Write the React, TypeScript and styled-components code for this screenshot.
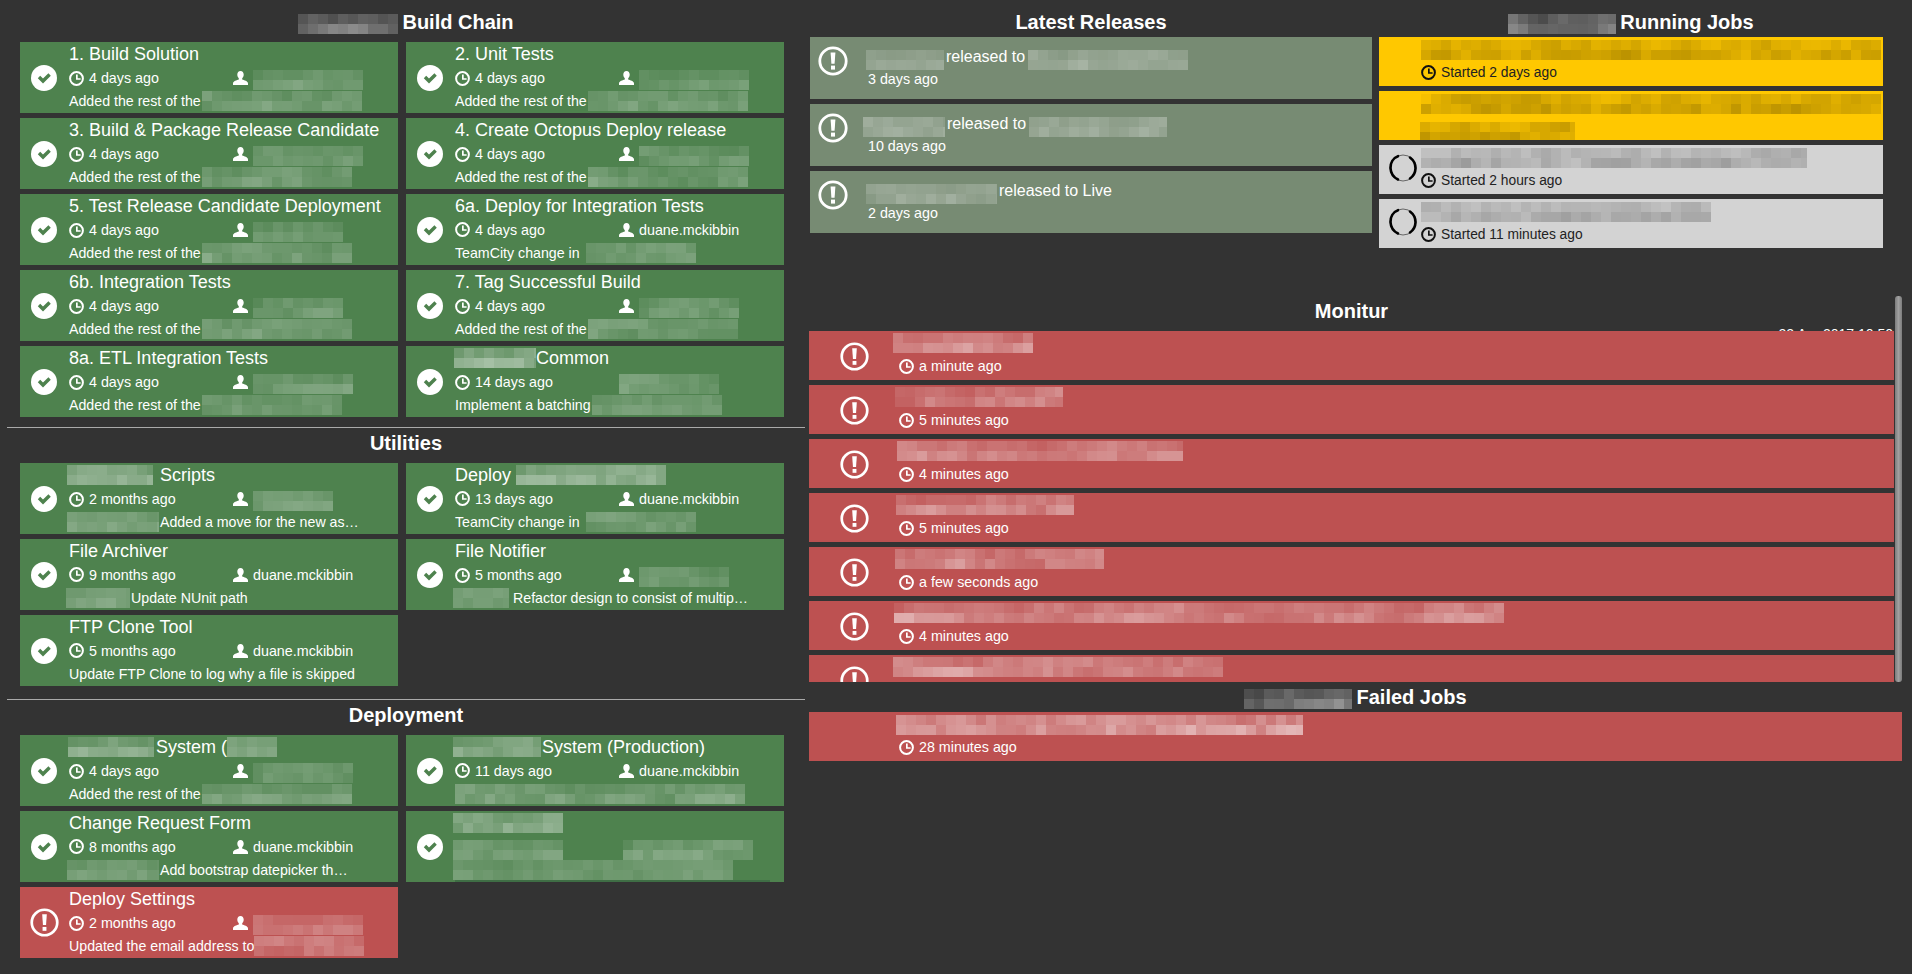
import React from 'react';
import styled, { createGlobalStyle } from 'styled-components';

const GREEN = '#4e824e';
const RED = '#bd5151';
const SAGE = '#778b73';
const YELLOW = '#ffc800';
const GREY = '#d3d3d3';

const Global = createGlobalStyle`
  html, body {
    margin: 0;
    height: 100%;
    overflow: hidden;
    background: #333;
    color: #fff;
    font-family: "Liberation Sans", Arial, sans-serif;
  }
`

const BlurSvg = styled.svg<{ $ml: number; $mr: number; $mt: number }>`
  display: block;
  flex: none;
  margin: ${p => p.$mt}px ${p => p.$mr}px 0 ${p => p.$ml}px;
`
const Page = styled.div`
  display: grid;
  grid-template-columns: 798px 1fr;
  column-gap: 4px;
  padding: 7px 10px 0 7px;
`
const LeftColumn = styled.div`
  display: flex;
  flex-direction: column;
`
const RightColumn = styled.div`
  display: flex;
  flex-direction: column;
  min-width: 0;
`
const TopRow = styled.div`
  display: grid;
  grid-template-columns: 562px 504px;
  column-gap: 7px;
  padding-left: 1px;
  height: 289px;
`
const Heading = styled.div<{ $gap?: number }>`
  display: flex;
  justify-content: center;
  align-items: center;
  height: 30px;
  margin-bottom: ${p => p.$gap ?? 0}px;
  font-size: 20px;
  font-weight: 700;
  white-space: nowrap;
`
const Divider = styled.div<{ $top: number }>`
  height: 1px;
  margin-top: ${p => p.$top}px;
  background: #aaa;
`
const BuildGrid = styled.div`
  display: grid;
  grid-template-columns: 378px 378px;
  column-gap: 8px;
  row-gap: 5px;
  padding-left: 13px;
`
const Card = styled.div<{ $bg: string }>`
  display: flex;
  height: 71px;
  background: ${p => p.$bg};
  overflow: hidden;
`
const IconCell = styled.div`
  flex: 0 0 49px;
  display: flex;
  align-items: center;
  justify-content: center;
  padding-right: 1px;
  box-sizing: border-box;
`
const CardBody = styled.div`
  flex: 1;
  min-width: 0;
  display: grid;
  grid-template-rows: 24px 23px 23px;
`
const CardTitle = styled.div`
  display: flex;
  align-items: center;
  font-size: 18px;
  white-space: nowrap;
`
const CardMeta = styled.div`
  display: grid;
  grid-template-columns: 164px 1fr;
  align-items: center;
  font-size: 14.3px;
`
const MetaItem = styled.div<{ $gap: number }>`
  display: flex;
  align-items: center;
  gap: ${p => p.$gap}px;
  white-space: nowrap;
  ${BlurSvg} {
    margin-top: 4px;
  }
`
const CardCommit = styled.div`
  display: flex;
  align-items: center;
  font-size: 14.2px;
  white-space: nowrap;
`
const RawBody = styled.div`
  display: flex;
  flex-direction: column;
  padding-top: 2px;
`
const RawLine = styled.div<{ $top: number }>`
  display: flex;
  margin-top: ${p => p.$top}px;
`
const RawShadow = styled.div`
  width: 315px;
  height: 2px;
  background: #3f6e45;
`
const Stack = styled.div<{ $gap?: number }>`
  display: flex;
  flex-direction: column;
  gap: ${p => p.$gap ?? 5}px;
`
const ReleaseCard = styled.div`
  display: flex;
  height: 62px;
  background: ${SAGE};
`
const ReleaseIcon = styled.div`
  flex: 0 0 56px;
  padding: 9px 0 0 8px;
  box-sizing: border-box;
`
const ReleaseBody = styled.div`
  display: flex;
  flex-direction: column;
  padding-top: 10px;
`
const ReleaseTitle = styled.div`
  display: flex;
  align-items: center;
  height: 20px;
  font-size: 16px;
  white-space: nowrap;
`
const ReleaseTime = styled.div`
  height: 20px;
  margin-top: 2px;
  padding-left: 2px;
  font-size: 14.3px;
  line-height: 20px;
`
const JobCard = styled.div<{ $bg: string }>`
  display: flex;
  height: 49px;
  background: ${p => p.$bg};
  color: #222;
  overflow: hidden;
`
const JobIcon = styled.div`
  flex: 0 0 41px;
  display: flex;
  align-items: center;
  justify-content: flex-end;
  padding: 0 3px 3px 0;
  box-sizing: border-box;
`
const JobBody = styled.div`
  display: flex;
  flex-direction: column;
  padding: 3px 0 0 1px;
`
const TimeRow = styled.div<{ $top: number; $left: number; $size?: number }>`
  display: flex;
  align-items: center;
  gap: 5px;
  margin-top: ${p => p.$top}px;
  padding-left: ${p => p.$left}px;
  height: 18px;
  font-size: ${p => p.$size ?? 14.3}px;
  white-space: nowrap;
`
const MonitorPane = styled.div`
  position: relative;
  height: 386px;
  padding-right: 8px;
  overflow: hidden;
`
const DateStamp = styled.div`
  height: 5px;
  padding-right: 1px;
  font-size: 14px;
  line-height: 16px;
  text-align: right;
  overflow: hidden;
`
const MonitorRows = styled.div`
  display: flex;
  flex-direction: column;
  gap: 5px;
`
const AlertRow = styled.div`
  flex: none;
  display: flex;
  height: 49px;
  background: ${RED};
`
const AlertIcon = styled.div`
  flex: 0 0 84px;
  display: flex;
  justify-content: center;
  padding: 11px 0 0 6px;
  box-sizing: border-box;
`
const AlertBody = styled.div`
  display: flex;
  flex-direction: column;
  padding-top: 2px;
`
const ScrollThumb = styled.div`
  position: absolute;
  top: 0;
  right: 0;
  bottom: 0;
  width: 7px;
  border-radius: 3px;
  background: linear-gradient(to right, #7c7c7c, #a0a0a0 50%, #7c7c7c);
`
const FailedRow = styled.div`
  display: flex;
  flex-direction: column;
  height: 49px;
  padding: 3px 0 0 87px;
  box-sizing: border-box;
  background: ${RED};
`

// pixelated masks over redacted text, one rect per censored cell
const Blur = ({ w, seed, ink = '#fff', lo = 0.1, hi = 0.42, rows = 2, mr = 0, ml = 0, mt = 0 }: {
  w: number, seed: number, ink?: string, lo?: number, hi?: number, rows?: number, mr?: number, ml?: number, mt?: number
}) => {
  const cells: React.ReactNode[] = []
  let s = seed * 7919 + 13
  const next = () => {
    s = (s * 16807) % 2147483647
    return (s % 1000) / 1000
  }
  const cols = Math.ceil(w / 10)
  for (let r = 0; r < rows; r++) {
    let prev = next()
    const rowFactor = r === 0 && rows > 1 ? 0.8 : 1
    for (let c = 0; c < cols; c++) {
      const v = prev * 0.55 + next() * 0.45
      prev = v
      cells.push(
        <rect key={`${r}-${c}`} x={c * 10} y={r * 10} width={10} height={10} fill={ink} opacity={(lo + (hi - lo) * v) * rowFactor} />
      )
    }
  }
  return (
    <BlurSvg width={w} height={rows * 10} viewBox={`0 0 ${w} ${rows * 10}`} $ml={ml} $mr={mr} $mt={mt}>
      {cells}
    </BlurSvg>
  )
}

const OkIcon = () => (
  <svg width="26" height="26" viewBox="0 0 26 26">
    <circle cx="13" cy="13" r="13" fill="#fff" />
    <path d="M6.800 13.200l2.400-2.400 2.800 2.800 5.400-5.300 2.400 2.400-7.800 7.700z" fill={GREEN} />
  </svg>
)
const AlertGlyph = ({ size = 29 }: { size?: number }) => (
  <svg width={size} height={size} viewBox="0 0 30 30">
    <circle cx="15" cy="15" r="13.200" fill="none" stroke="#fff" strokeWidth="2.800" />
    <path d="M12.600 6.500h4.800l-.8 11.200h-3.200z" fill="#fff" />
    <rect x="13" y="19.600" width="4" height="4" fill="#fff" />
  </svg>
)
const ClockIcon = ({ color = '#fff' }: { color?: string }) => (
  <svg width="15" height="15" viewBox="0 0 15 15" style={{ flex: 'none' }}>
    <circle cx="7.500" cy="7.500" r="6.400" fill="none" stroke={color} strokeWidth="2" />
    <path d="M7 3.600h1.700v3.600h2.900v1.600H7z" fill={color} />
  </svg>
)
const UserIcon = () => (
  <svg width="15" height="14" viewBox="0 0 15 14" style={{ flex: 'none' }}>
    <path d="M7.500 0c2 0 3.200 1.500 3.200 3.600 0 1.600-.7 3-1.500 3.700v1.300c1.800.6 5.800 1.600 5.800 3.900V14H0v-1.500c0-2.300 4-3.300 5.800-3.900V7.300C5 6.600 4.300 5.200 4.300 3.600 4.300 1.500 5.500 0 7.500 0z" fill="#fff" />
  </svg>
)
const Spinner = () => (
  <svg width="28" height="28" viewBox="0 0 28 28">
    <circle cx="14" cy="14" r="13" fill="none" stroke="#666" strokeWidth="1" />
    <path d="M9 2.200C4 4 1.300 9 1.500 14c.2 5 3 9.300 7.500 11.500" fill="none" stroke="#000" strokeWidth="2.600" strokeLinecap="round" />
    <path d="M21 3.500c3.300 2.500 5.600 6.300 5.500 10.800-.1 4-2 7.800-5.500 10.200" fill="none" stroke="#000" strokeWidth="2.600" strokeLinecap="round" />
  </svg>
)

type Build = {
  title?: React.ReactNode
  time?: string
  user?: React.ReactNode
  commit?: React.ReactNode
  failed?: boolean
  raw?: React.ReactNode
  noUserIcon?: boolean
}

const duane = 'duane.mckibbin'
const added = (w: number, seed: number) => <>Added the rest of the<Blur w={w} seed={seed} lo={0.04} hi={0.38} ml={1} /></>
const tcChange = (seed: number) => <>TeamCity change in<Blur w={110} seed={seed} lo={0.06} hi={0.38} ml={6} /></>
const userBlur = (w: number, seed: number) => <Blur w={w} seed={seed} lo={0.05} hi={0.35} />

const buildChain: Build[] = [
  { title: '1. Build Solution', time: '4 days ago', user: userBlur(110, 1), commit: added(160, 2) },
  { title: '2. Unit Tests', time: '4 days ago', user: userBlur(110, 3), commit: added(160, 4) },
  { title: '3. Build & Package Release Candidate', time: '4 days ago', user: userBlur(110, 5), commit: added(150, 6) },
  { title: '4. Create Octopus Deploy release', time: '4 days ago', user: userBlur(110, 7), commit: added(160, 8) },
  { title: '5. Test Release Candidate Deployment', time: '4 days ago', user: userBlur(90, 9), commit: added(150, 10) },
  { title: '6a. Deploy for Integration Tests', time: '4 days ago', user: duane, commit: tcChange(11) },
  { title: '6b. Integration Tests', time: '4 days ago', user: userBlur(90, 12), commit: added(150, 13) },
  { title: '7. Tag Successful Build', time: '4 days ago', user: userBlur(100, 14), commit: added(150, 15) },
  { title: '8a. ETL Integration Tests', time: '4 days ago', user: userBlur(100, 16), commit: added(140, 17) },
  {
    title: <><Blur w={82} seed={18} lo={0.12} hi={0.55} ml={-1} />Common</>,
    time: '14 days ago',
    user: userBlur(100, 19),
    commit: <>Implement a batching<Blur w={130} seed={20} lo={0.05} hi={0.35} ml={1} /></>,
    noUserIcon: true,
  },
]

const utilities: Build[] = [
  {
    title: <><Blur w={86} seed={21} lo={0.12} hi={0.55} ml={-2} mr={7} />Scripts</>,
    time: '2 months ago',
    user: <Blur w={80} seed={22} lo={0.08} hi={0.38} />,
    commit: <><Blur w={92} seed={23} lo={0.12} hi={0.42} ml={-2} mr={1} />Added a move for the new as…</>,
  },
  {
    title: <>Deploy<Blur w={150} seed={24} lo={0.12} hi={0.55} ml={5} /></>,
    time: '13 days ago',
    user: duane,
    commit: tcChange(25),
  },
  {
    title: 'File Archiver',
    time: '9 months ago',
    user: duane,
    commit: <><Blur w={64} seed={26} lo={0.12} hi={0.42} ml={-3} mr={1} />Update NUnit path</>,
  },
  {
    title: 'File Notifier',
    time: '5 months ago',
    user: userBlur(90, 27),
    commit: <><Blur w={56} seed={28} lo={0.12} hi={0.42} ml={-2} mr={4} />Refactor design to consist of multip…</>,
  },
  { title: 'FTP Clone Tool', time: '5 months ago', user: duane, commit: 'Update FTP Clone to log why a file is skipped' },
]

const deployment: Build[] = [
  {
    title: <><Blur w={86} seed={29} lo={0.1} hi={0.5} ml={-1} mr={2} />System (<Blur w={50} seed={30} lo={0.08} hi={0.4} /></>,
    time: '4 days ago',
    user: userBlur(100, 31),
    commit: added(150, 32),
  },
  {
    title: <><Blur w={88} seed={33} lo={0.1} hi={0.5} ml={-2} mr={1} />System (Production)</>,
    time: '11 days ago',
    user: duane,
    commit: <Blur w={290} seed={34} lo={0.04} hi={0.45} />,
  },
  {
    title: 'Change Request Form',
    time: '8 months ago',
    user: duane,
    commit: <><Blur w={92} seed={35} lo={0.08} hi={0.35} ml={-2} mr={1} />Add bootstrap datepicker th…</>,
  },
  {
    raw: (
      <RawBody>
        <Blur w={110} seed={36} lo={0.1} hi={0.6} ml={-2} />
        <RawLine $top={7}>
          <Blur w={110} seed={37} lo={0.05} hi={0.45} ml={-2} />
          <Blur w={130} seed={44} lo={0.05} hi={0.45} ml={60} />
        </RawLine>
        <Blur w={280} seed={38} lo={0.08} hi={0.32} ml={-2} />
        <RawShadow />
      </RawBody>
    ),
  },
  {
    title: 'Deploy Settings',
    time: '2 months ago',
    user: <Blur w={110} seed={39} lo={0.05} hi={0.4} />,
    commit: <>Updated the email address to<Blur w={110} seed={40} lo={0.05} hi={0.45} /></>,
    failed: true,
  },
]

const BuildCard = ({ title, time, user, commit, failed, raw, noUserIcon }: Build) => (
  <Card $bg={failed ? RED : GREEN}>
    <IconCell>{failed ? <AlertGlyph /> : <OkIcon />}</IconCell>
    {raw
      ? raw
      : (
        <CardBody>
          <CardTitle>{title}</CardTitle>
          <CardMeta>
            <MetaItem $gap={5}><ClockIcon />{time}</MetaItem>
            <MetaItem $gap={5}>{!noUserIcon && <UserIcon />}{user}</MetaItem>
          </CardMeta>
          <CardCommit>{commit}</CardCommit>
        </CardBody>
      )}
  </Card>
)

const BuildSection = ({ items }: { items: Build[] }) => (
  <BuildGrid>{items.map((b, i) => <BuildCard key={i} {...b} />)}</BuildGrid>
)

const releases = [
  { from: 78, to: 160, tail: 'released to', time: '3 days ago', seed: 41, pad: 0 },
  { from: 82, to: 138, tail: 'released to', time: '10 days ago', seed: 42, pad: -3 },
  { from: 131, to: 0, tail: 'released to Live', time: '2 days ago', seed: 43, pad: 0 },
]

const alerts = [
  { w: 140, pad: 0, time: 'a minute ago' },
  { w: 168, pad: 2, time: '5 minutes ago' },
  { w: 286, pad: 4, time: '4 minutes ago' },
  { w: 178, pad: 3, time: '5 minutes ago' },
  { w: 209, pad: 2, time: 'a few seconds ago' },
  { w: 610, pad: 1, time: '4 minutes ago' },
  { w: 330, pad: 0, time: '' },
]

export default function App() {
  return (
    <Page>
      <Global />
      <LeftColumn>
        <Heading $gap={5}><Blur w={100} seed={50} lo={0.08} hi={0.5} mr={4} mt={3} />Build Chain</Heading>
        <BuildSection items={buildChain} />
        <Divider $top={10} />
        <Heading $gap={5}>Utilities</Heading>
        <BuildSection items={utilities} />
        <Divider $top={13} />
        <Heading $gap={5}>Deployment</Heading>
        <BuildSection items={deployment} />
      </LeftColumn>
      <RightColumn>
        <TopRow>
          <div>
            <Heading>Latest Releases</Heading>
            <Stack>
              {releases.map(r => (
                <ReleaseCard key={r.seed}>
                  <ReleaseIcon><AlertGlyph size={30} /></ReleaseIcon>
                  <ReleaseBody>
                    <ReleaseTitle>
                      <Blur w={r.from} seed={r.seed} lo={0.12} hi={0.42} ml={r.pad} mr={2} mt={5} />
                      {r.tail}
                      {r.to > 0 && <Blur w={r.to} seed={r.seed + 10} lo={0.1} hi={0.42} ml={3} mt={5} />}
                    </ReleaseTitle>
                    <ReleaseTime>{r.time}</ReleaseTime>
                  </ReleaseBody>
                </ReleaseCard>
              ))}
            </Stack>
          </div>
          <div>
            <Heading><Blur w={108} seed={51} lo={0.08} hi={0.5} mr={4} mt={3} />Running Jobs</Heading>
            <Stack>
              <JobCard $bg={YELLOW}>
                <JobIcon />
                <JobBody>
                  <Blur w={460} seed={52} ink="#000" lo={0.02} hi={0.3} />
                  <TimeRow $top={3} $left={0} $size={13.8}><ClockIcon color="#111" />Started 2 days ago</TimeRow>
                </JobBody>
              </JobCard>
              <JobCard $bg={YELLOW}>
                <JobIcon />
                <JobBody>
                  <Blur w={460} seed={53} ink="#000" lo={0.02} hi={0.34} />
                  <Blur w={155} seed={54} ink="#000" lo={0.02} hi={0.3} ml={-1} mt={8} />
                </JobBody>
              </JobCard>
              <JobCard $bg={GREY}>
                <JobIcon><Spinner /></JobIcon>
                <JobBody>
                  <Blur w={386} seed={55} ink="#000" lo={0.05} hi={0.32} />
                  <TimeRow $top={3} $left={0} $size={13.8}><ClockIcon color="#111" />Started 2 hours ago</TimeRow>
                </JobBody>
              </JobCard>
              <JobCard $bg={GREY}>
                <JobIcon><Spinner /></JobIcon>
                <JobBody>
                  <Blur w={290} seed={56} ink="#000" lo={0.05} hi={0.28} />
                  <TimeRow $top={3} $left={0} $size={13.8}><ClockIcon color="#111" />Started 11 minutes ago</TimeRow>
                </JobBody>
              </JobCard>
            </Stack>
          </div>
        </TopRow>
        <MonitorPane>
          <Heading>Monitur</Heading>
          <DateStamp>22 Apr 2017 10:50</DateStamp>
          <MonitorRows>
            {alerts.map((a, i) => (
              <AlertRow key={i}>
                <AlertIcon><AlertGlyph /></AlertIcon>
                <AlertBody>
                  <Blur w={a.w} seed={60 + i} lo={0.06} hi={0.55} ml={a.pad} />
                  <TimeRow $top={4} $left={6}><ClockIcon />{a.time}</TimeRow>
                </AlertBody>
              </AlertRow>
            ))}
          </MonitorRows>
          <ScrollThumb />
        </MonitorPane>
        <Heading><Blur w={108} seed={70} lo={0.08} hi={0.6} mr={4} mt={3} />Failed Jobs</Heading>
        <FailedRow>
          <Blur w={407} seed={71} lo={0.06} hi={0.7} />
          <TimeRow $top={3} $left={3}><ClockIcon />28 minutes ago</TimeRow>
        </FailedRow>
      </RightColumn>
    </Page>
  )
}
